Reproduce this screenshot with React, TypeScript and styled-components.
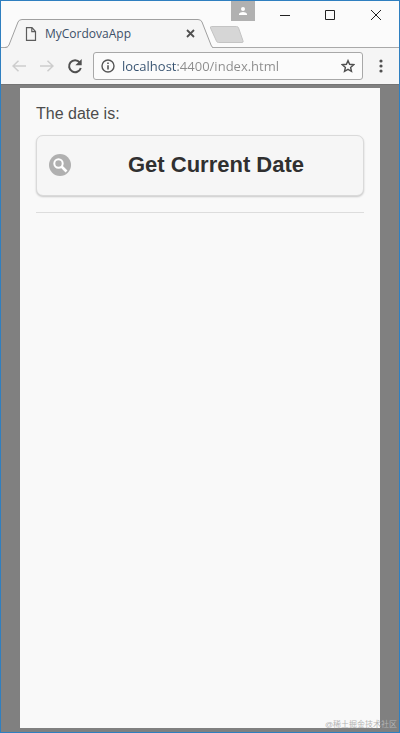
import React from "react";
import styled, { createGlobalStyle } from "styled-components";

const uiFont = `"Open Sans", "Noto Sans", sans-serif`;
const pageFont = `"Liberation Sans", Arial, sans-serif`;

const GlobalStyle = createGlobalStyle`
  *, *::before, *::after { box-sizing: border-box; }
  body { margin: 0; background: #808080; }
  button, input { font: inherit; }
`;

const Window = styled.div`
  position: relative;
  display: flex;
  flex-direction: column;
  min-height: 100vh;
  border: 1px solid #2f7fc0;
  background: #808080;
  font-family: ${uiFont};
`;

const TitleBar = styled.header`
  display: flex;
  align-items: flex-start;
  height: 47px;
  padding-left: 4px;
  background: #fbfbfb;
  box-shadow: inset 0 -1px #a9a9a9;
`;

const TabStrip = styled.div`
  display: flex;
  align-items: flex-end;
  align-self: stretch;
`;

const Tab = styled.div`
  position: relative;
  display: flex;
  align-items: center;
  width: 208px;
  height: 29px;
  padding: 0 15px 0 20px;
`;

const TabShape = styled.svg`
  position: absolute;
  inset: 0;
`;

const TabTitle = styled.span`
  position: relative;
  flex: 1;
  margin-left: 8px;
  color: #3c5068;
  font-size: 12px;
  line-height: 16px;
`;

const IconButton = styled.button<{ $width: number; $height: number }>`
  position: relative;
  display: flex;
  flex: none;
  align-items: center;
  justify-content: center;
  width: ${(p) => p.$width}px;
  height: ${(p) => p.$height}px;
  padding: 0;
  border: 0;
  background: none;
`;

const NewTabButton = styled(IconButton)`
  align-self: flex-end;
  margin: 0 -36px 4px -5px;
`;

const PageIcon = styled.svg`
  position: relative;
  flex: none;
`;

const WindowControls = styled.div`
  display: flex;
  flex: 1;
  justify-content: flex-end;
`;

const ProfileButton = styled(IconButton)`
  margin-right: 7px;
  background: #b1b1b1;
`;

const Toolbar = styled.nav`
  display: flex;
  align-items: center;
  height: 36px;
  padding: 0 1px 0 4px;
  background: #f5f5f5;
`;

const AddressBar = styled.div`
  display: flex;
  flex: 1;
  align-items: center;
  min-width: 0;
  height: 28px;
  margin-left: 4px;
  border: 1px solid #a8a8a8;
  border-radius: 3px;
  background: #fbfbfb;
`;

const AddressInput = styled.input`
  flex: 1;
  min-width: 0;
  height: 24px;
  padding: 0;
  border: 0;
  outline: 0;
  background: linear-gradient(to right, #35516f 56px, #8b8b8b 56px);
  background-clip: text;
  color: transparent;
  font-size: 13px;
`;

const Viewport = styled.main`
  display: flex;
  flex: 1;
  padding: 4px 19px;
  box-shadow: inset 0 1px #747474;
`;

const Page = styled.section`
  flex: 1;
  padding: 16px;
  background: #f9f9f9;
  color: #4c4c4c;
  font-family: ${pageFont};
`;

const DateLabel = styled.p`
  margin: 0 0 11px;
  font-size: 16px;
  line-height: 20px;
`;

const DateButton = styled.button`
  display: flex;
  align-items: center;
  width: 100%;
  height: 61px;
  padding: 0 2px 2px 12px;
  border: 1px solid #dadada;
  border-radius: 7px;
  background: #f6f6f6;
  box-shadow: 0 1px 2px rgba(0, 0, 0, 0.2);
  color: #303030;
  font-weight: bold;
  font-size: 22px;
  line-height: 28px;
`;

const ButtonText = styled.span`
  flex: 1;
  text-align: center;
`;

const Divider = styled.hr`
  height: 1px;
  margin: 16px 0 0;
  border: 0;
  background: #dddddd;
`;

const Watermark = styled.small`
  position: absolute;
  right: 2px;
  bottom: 1px;
  color: #b4b4b4;
  font-family: "Liberation Sans", "Noto Sans CJK SC", sans-serif;
  font-size: 8px;
  line-height: 12px;
`;

function Arrow({ flipped = false }: { flipped?: boolean }) {
  return (
    <svg width="14" height="12" viewBox="0 0 14 12" fill="none" stroke="#cdcdcd" strokeWidth="1.5">
      <path d={flipped ? "M0 6h13M7.5.7 13 6l-5.5 5.3" : "M14 6H1M6.5.7 1 6l5.5 5.3"} />
    </svg>
  );
}

export default function App() {
  return (
    <>
      <GlobalStyle />
      <Window>
        <TitleBar>
          <TabStrip>
            <Tab>
              <TabShape width="208" height="29" viewBox="0 0 208 29">
                <path d="M0 29C3 28.500 4 28 5 25L13 3Q14 .5 17 .5H193Q196 .5 197 3L206 26Q207 28.500 208 29Z" fill="#f5f5f5" />
                <path d="M-4 28.500H0Q3 28.500 4 26L13 3Q14 .5 17 .5H193Q196 .5 197 3L206 26Q207 28.500 208 28.500" fill="none" stroke="#a0a0a0" />
              </TabShape>
              <PageIcon width="12" height="14" viewBox="0 0 12 14" fill="none" stroke="#5c5c5c" strokeWidth="1.2">
                <path d="M1.500.7h5.500l3.500 3.800v8.800h-9ZM6.800.7v4h3.700" />
              </PageIcon>
              <TabTitle>MyCordovaApp</TabTitle>
              <IconButton $width={16} $height={16} aria-label="Close tab">
                <svg width="9" height="9" viewBox="0 0 9 9" stroke="#505050" strokeWidth="1.8">
                  <path d="m1 1 7 7M8 1 1 8" />
                </svg>
              </IconButton>
            </Tab>
            <NewTabButton $width={36} $height={18} aria-label="New tab">
              <svg width="36" height="18" viewBox="0 0 36 18">
                <path d="M3.500.5h25q1.500 0 2 1.300l4.500 13q.7 1.700-1 1.700H10.500q-1.500 0-2-1.300L2.500 2q-.5-1.500 1-1.500Z" fill="#d6d6d6" stroke="#c4c4c4" />
              </svg>
            </NewTabButton>
          </TabStrip>
          <WindowControls>
            <ProfileButton $width={24} $height={20} aria-label="Profile">
              <svg width="8" height="8" viewBox="0 0 8 8" fill="#fff">
                <circle cx="4" cy="2" r="2" />
                <path d="M0 8V6.800Q1 5 4 5t4 1.800V8Z" />
              </svg>
            </ProfileButton>
            <IconButton $width={45} $height={28} aria-label="Minimize">
              <svg width="10" height="10" viewBox="0 0 10 10" stroke="#222">
                <path d="M0 5.500h10" />
              </svg>
            </IconButton>
            <IconButton $width={46} $height={28} aria-label="Maximize">
              <svg width="10" height="10" viewBox="0 0 10 10" stroke="#222" fill="none">
                <path d="M.5.5h9v9h-9Z" />
              </svg>
            </IconButton>
            <IconButton $width={46} $height={28} aria-label="Close">
              <svg width="10" height="10" viewBox="0 0 10 10" stroke="#222">
                <path d="m0 0 10 10M10 0 0 10" />
              </svg>
            </IconButton>
          </WindowControls>
        </TitleBar>
        <Toolbar>
          <IconButton $width={28} $height={28} aria-label="Back"><Arrow /></IconButton>
          <IconButton $width={28} $height={28} aria-label="Forward"><Arrow flipped /></IconButton>
          <IconButton $width={28} $height={28} aria-label="Reload">
            <svg width="16" height="16" viewBox="0 0 16 16">
              <path d="M12.700 4.300A6 6 0 1 0 13.800 10" fill="none" stroke="#505050" strokeWidth="2" />
              <path d="M14.700 1v6.300H8.400Z" fill="#505050" />
            </svg>
          </IconButton>
          <AddressBar>
            <IconButton $width={28} $height={26} aria-label="Site information">
              <svg width="14" height="14" viewBox="0 0 14 14" fill="none" stroke="#555">
                <circle cx="7" cy="7" r="6" strokeWidth="1.400" />
                <path d="M7 6.200v4.300M7 3.500V5" strokeWidth="1.600" />
              </svg>
            </IconButton>
            <AddressInput aria-label="Address" defaultValue="localhost:4400/index.html" />
            <IconButton $width={28} $height={26} aria-label="Bookmark this page">
              <svg width="14" height="14" viewBox="0 0 14 14" fill="none" stroke="#505050" strokeWidth="1.400">
                <path d="m7 1.600 1.600 3.700 4.100.4-3.100 2.700.9 4L7 10.300l-3.500 2.100.9-4-3.100-2.700 4.100-.4Z" />
              </svg>
            </IconButton>
          </AddressBar>
          <IconButton $width={35} $height={28} aria-label="Menu">
            <svg width="4" height="14" viewBox="0 0 4 14" fill="#505050">
              <circle cx="2" cy="2" r="1.600" />
              <circle cx="2" cy="7" r="1.600" />
              <circle cx="2" cy="12" r="1.600" />
            </svg>
          </IconButton>
        </Toolbar>
        <Viewport>
          <Page>
            <DateLabel>The date is:</DateLabel>
            <DateButton>
              <svg width="22" height="22" viewBox="0 0 22 22" fill="none" stroke="#fff">
                <circle cx="11" cy="11" r="11" fill="#b0b0b0" stroke="none" />
                <circle cx="9.500" cy="9.500" r="4.200" strokeWidth="2" />
                <path d="m12.500 12.500 5 5" strokeWidth="2.600" />
              </svg>
              <ButtonText>Get Current Date</ButtonText>
            </DateButton>
            <Divider />
          </Page>
        </Viewport>
        <Watermark>@稀土掘金技术社区</Watermark>
      </Window>
    </>
  );
}
